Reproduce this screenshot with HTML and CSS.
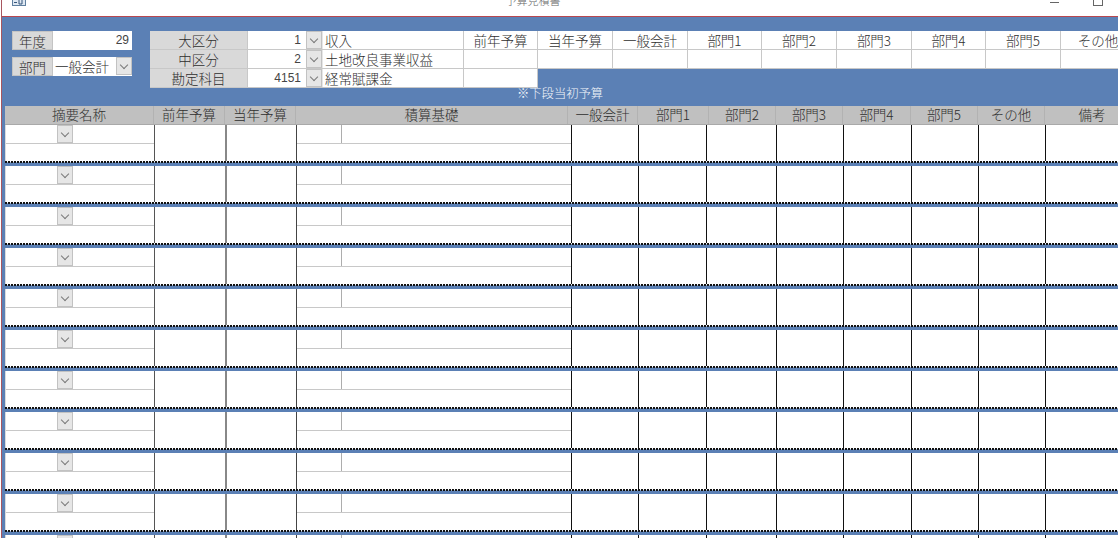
FILE: index.html
```html
<!DOCTYPE html>
<html lang="ja">
<head>
<meta charset="utf-8">
<title>予算見積書</title>
<link rel="stylesheet" href="styles.css">
</head>
<body>
<div class="window">
  <header class="titlebar">
    <svg class="app-icon" width="14" height="6" viewBox="0 0 14 6"><rect x="0.5" y="-3" width="13" height="8.5" fill="#dfe8f2" stroke="#5f7f9f"/><path d="M2 2.5h3M7 0v4M10 0v4M7 4h3" stroke="#35557a" fill="none"/></svg>
    <span class="title">予算見積書</span>
    <span class="win-min"></span>
    <span class="win-max"></span>
  </header>
  <main class="content">
    <section class="top">
      <div class="filters">
        <div class="filter">
          <span class="label">年度</span>
          <span class="value num">29</span>
        </div>
        <div class="filter">
          <span class="label">部門</span>
          <span class="value text">一般会計</span>
          <span class="dd"></span>
        </div>
      </div>
      <div class="summary">
        <div class="c label-cell">大区分</div><div class="c num-cell">1</div><div class="c dd-cell"><span class="dd"></span></div><div class="c name">収入</div>
        <div class="c">前年予算</div><div class="c">当年予算</div><div class="c">一般会計</div><div class="c">部門1</div><div class="c">部門2</div><div class="c">部門3</div><div class="c">部門4</div><div class="c">部門5</div><div class="c">その他</div>
        <div class="c label-cell">中区分</div><div class="c num-cell">2</div><div class="c dd-cell"><span class="dd"></span></div><div class="c name">土地改良事業収益</div>
        <div class="c"></div><div class="c"></div><div class="c"></div><div class="c"></div><div class="c"></div><div class="c"></div><div class="c"></div><div class="c"></div><div class="c"></div>
        <div class="c label-cell">勘定科目</div><div class="c num-cell">4151</div><div class="c dd-cell"><span class="dd"></span></div><div class="c name">経常賦課金</div>
        <div class="c"></div>
      </div>
    </section>
    <p class="note">※下段当初予算</p>
    <section class="sheet">
      <div class="head">
        <div>摘要名称</div><div>前年予算</div><div>当年予算</div><div>積算基礎</div><div>一般会計</div><div>部門1</div><div>部門2</div><div>部門3</div><div>部門4</div><div>部門5</div><div>その他</div><div>備考</div>
      </div>
      <div class="row"><div class="cells"><div class="col-a"><div class="top-line"><span class="dd"></span></div></div><div class="b1"></div><div class="b2"></div><div class="col-d b3"><div class="top-line"><span class="sub"></span></div></div><div class="b"></div><div class="b"></div><div class="b"></div><div class="b"></div><div class="b"></div><div class="b"></div><div class="b"></div><div class="b"></div></div><div class="dots"></div></div>
      <div class="row"><div class="cells"><div class="col-a"><div class="top-line"><span class="dd"></span></div></div><div class="b1"></div><div class="b2"></div><div class="col-d b3"><div class="top-line"><span class="sub"></span></div></div><div class="b"></div><div class="b"></div><div class="b"></div><div class="b"></div><div class="b"></div><div class="b"></div><div class="b"></div><div class="b"></div></div><div class="dots"></div></div>
      <div class="row"><div class="cells"><div class="col-a"><div class="top-line"><span class="dd"></span></div></div><div class="b1"></div><div class="b2"></div><div class="col-d b3"><div class="top-line"><span class="sub"></span></div></div><div class="b"></div><div class="b"></div><div class="b"></div><div class="b"></div><div class="b"></div><div class="b"></div><div class="b"></div><div class="b"></div></div><div class="dots"></div></div>
      <div class="row"><div class="cells"><div class="col-a"><div class="top-line"><span class="dd"></span></div></div><div class="b1"></div><div class="b2"></div><div class="col-d b3"><div class="top-line"><span class="sub"></span></div></div><div class="b"></div><div class="b"></div><div class="b"></div><div class="b"></div><div class="b"></div><div class="b"></div><div class="b"></div><div class="b"></div></div><div class="dots"></div></div>
      <div class="row"><div class="cells"><div class="col-a"><div class="top-line"><span class="dd"></span></div></div><div class="b1"></div><div class="b2"></div><div class="col-d b3"><div class="top-line"><span class="sub"></span></div></div><div class="b"></div><div class="b"></div><div class="b"></div><div class="b"></div><div class="b"></div><div class="b"></div><div class="b"></div><div class="b"></div></div><div class="dots"></div></div>
      <div class="row"><div class="cells"><div class="col-a"><div class="top-line"><span class="dd"></span></div></div><div class="b1"></div><div class="b2"></div><div class="col-d b3"><div class="top-line"><span class="sub"></span></div></div><div class="b"></div><div class="b"></div><div class="b"></div><div class="b"></div><div class="b"></div><div class="b"></div><div class="b"></div><div class="b"></div></div><div class="dots"></div></div>
      <div class="row"><div class="cells"><div class="col-a"><div class="top-line"><span class="dd"></span></div></div><div class="b1"></div><div class="b2"></div><div class="col-d b3"><div class="top-line"><span class="sub"></span></div></div><div class="b"></div><div class="b"></div><div class="b"></div><div class="b"></div><div class="b"></div><div class="b"></div><div class="b"></div><div class="b"></div></div><div class="dots"></div></div>
      <div class="row"><div class="cells"><div class="col-a"><div class="top-line"><span class="dd"></span></div></div><div class="b1"></div><div class="b2"></div><div class="col-d b3"><div class="top-line"><span class="sub"></span></div></div><div class="b"></div><div class="b"></div><div class="b"></div><div class="b"></div><div class="b"></div><div class="b"></div><div class="b"></div><div class="b"></div></div><div class="dots"></div></div>
      <div class="row"><div class="cells"><div class="col-a"><div class="top-line"><span class="dd"></span></div></div><div class="b1"></div><div class="b2"></div><div class="col-d b3"><div class="top-line"><span class="sub"></span></div></div><div class="b"></div><div class="b"></div><div class="b"></div><div class="b"></div><div class="b"></div><div class="b"></div><div class="b"></div><div class="b"></div></div><div class="dots"></div></div>
      <div class="row"><div class="cells"><div class="col-a"><div class="top-line"><span class="dd"></span></div></div><div class="b1"></div><div class="b2"></div><div class="col-d b3"><div class="top-line"><span class="sub"></span></div></div><div class="b"></div><div class="b"></div><div class="b"></div><div class="b"></div><div class="b"></div><div class="b"></div><div class="b"></div><div class="b"></div></div><div class="dots"></div></div>
      <div class="row"><div class="cells"><div class="col-a"><div class="top-line"><span class="dd"></span></div></div><div class="b1"></div><div class="b2"></div><div class="col-d b3"><div class="top-line"><span class="sub"></span></div></div><div class="b"></div><div class="b"></div><div class="b"></div><div class="b"></div><div class="b"></div><div class="b"></div><div class="b"></div><div class="b"></div></div><div class="dots"></div></div>
    </section>
  </main>
</div>
</body>
</html>
```
FILE: styles.css
```css
* { box-sizing: border-box; }
html, body { margin: 0; height: 100%; overflow: hidden; background: #fff; }
body {
  font-family: "Noto Sans CJK JP", "Liberation Sans", sans-serif;
  font-size: 13.5px;
  font-weight: 300;
  color: #2e2e2e;
}
.window {
  width: 1117px;
  height: 538px;
  margin-left: 1px;
  border-left: 1px solid #a8565f;
  overflow: hidden;
  display: flex;
  flex-direction: column;
}
.titlebar {
  flex: 0 0 17px;
  position: relative;
  display: flex;
  justify-content: center;
  align-items: flex-end;
  padding: 0 54px 10px 0;
  background: #fff;
  border-bottom: 1px solid #b8474f;
  overflow: hidden;
}
.title { font-size: 11px; line-height: 12px; color: #666; }
.app-icon { position: absolute; left: 10px; top: 0; }
.win-min { position: absolute; left: 1048px; top: 2px; width: 9px; height: 1px; background: #666; }
.win-max { position: absolute; left: 1091px; top: -4px; width: 10px; height: 10px; border: 1px solid #666; }

.content { flex: 1; background: #5b80b5; min-height: 0; }

.top { display: flex; padding: 14px 0 0 10px; align-items: flex-start; }
.filters { flex: 0 0 120px; display: flex; flex-direction: column; gap: 7px; margin-right: 18px; }
.filter { display: flex; height: 19px; background: #fff; }
.label {
  flex: 0 0 41px;
  background: #d9d9d9;
  text-align: center;
  line-height: 18px;
  border: 1px solid #c4c4c4;
}
.value { flex: 1; line-height: 18px; padding: 0 3px; white-space: nowrap; }
.num { text-align: right; font-family: "Liberation Sans", sans-serif; font-size: 12px; font-weight: 400; color: #444; }
.text { padding-left: 2px; }

.dd {
  display: flex;
  flex: 0 0 16px;
  width: 16px;
  height: 18px;
  align-items: center;
  justify-content: center;
  background: #e6e6e6;
  border: 1px solid #c2c2c2;
}
.dd::after {
  content: "";
  width: 5px;
  height: 5px;
  margin-top: -3px;
  border-right: 1px solid #7a7a7a;
  border-bottom: 1px solid #7a7a7a;
  transform: rotate(45deg);
}

.summary {
  flex: 0 0 auto;
  display: grid;
  grid-template-columns: 98px 58px 17px 141px 74px 75px 75px 74px 75px 75px 74px 75px 75px;
  grid-auto-rows: 19px;
}
.c {
  background: #fff;
  border-right: 1px solid #c8c8c8;
  border-bottom: 1px solid #c8c8c8;
  text-align: center;
  line-height: 18px;
  white-space: nowrap;
}
.label-cell { background: #d9d9d9; }
.num-cell { text-align: right; padding-right: 5px; font-family: "Liberation Sans", sans-serif; font-size: 12px; font-weight: 400; color: #444; border-right: 0; }
.dd-cell { background: #e6e6e6; border-right: 0; }
.name { text-align: left; padding-left: 2px; }

.note {
  margin: 0;
  height: 18px;
  padding-left: 515px;
  font-size: 12.3px;
  line-height: 11px;
  color: #f2f5fa;
}

.sheet { padding-left: 3px; }
.head {
  display: grid;
  grid-template-columns: 149px 71px 71px 272px 70px 71px 67px 67px 68px 67px 67px 95px;
  height: 19px;
  background: #c0c0c0;
  border-bottom: 1px solid #a9a9a9;
}
.head > div { text-align: center; line-height: 17px; border-right: 1px solid #b2b2b2; white-space: nowrap; }

.row { height: 41px; padding-bottom: 3px; }
.cells {
  height: 36px;
  display: grid;
  grid-template-columns: 149px 71px 71px 275px 67px 68px 70px 67px 68px 67px 67px 95px;
  background: #fff;
}
.col-a { border-left: 1px solid #dcdcdc; }
.top-line { height: 19px; display: flex; border-bottom: 1px solid #c8c8c8; }
.col-a .dd { margin-left: 51px; }
.sub { width: 45px; border-right: 1px solid #adadad; }
.b1 { border-left: 1px solid #555; }
.b2 { border-left: 2px solid #888; }
.b3 { border-left: 1px solid #444; }
.b { border-left: 1px solid #111; }
.dots {
  height: 2px;
  background:
    repeating-linear-gradient(90deg, #111 0 2px, transparent 2px 3px),
    linear-gradient(#fff 0 1px, #8ea6c8 1px 2px);
}
```
